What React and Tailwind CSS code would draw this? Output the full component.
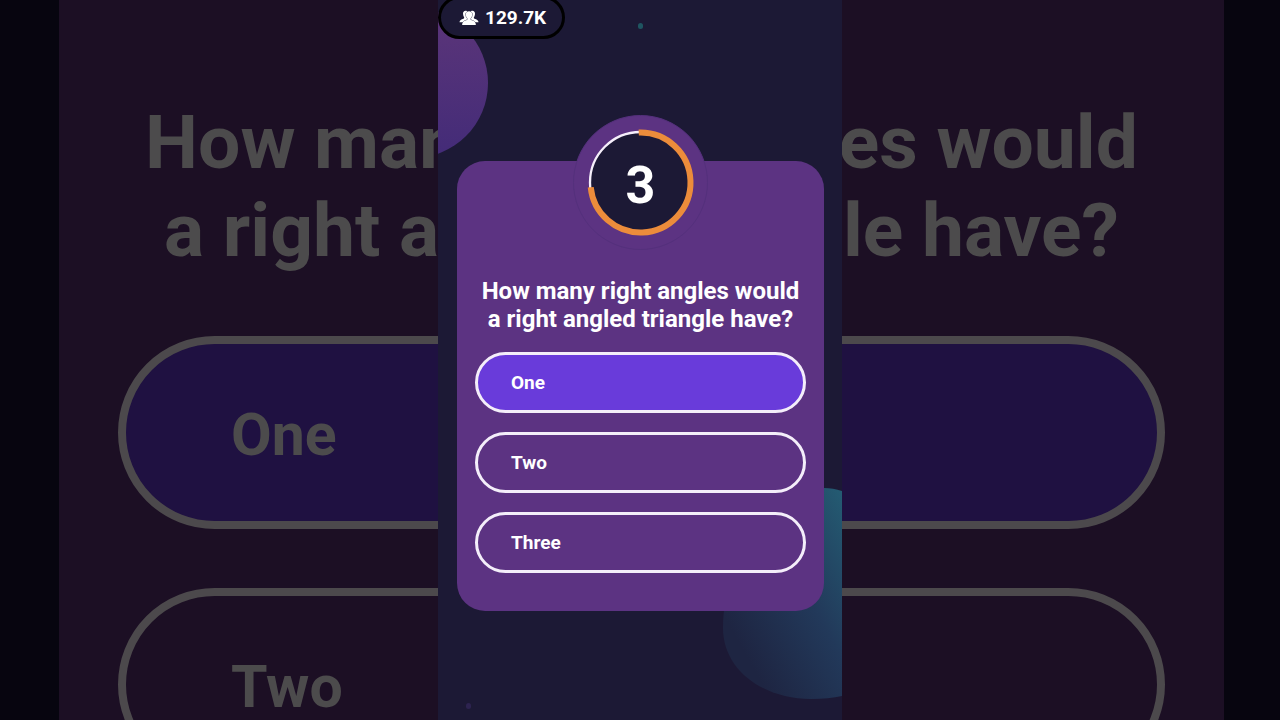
import React, { useState } from 'react';

const question = {
  lines: ['How many right angles would', 'a right angled triangle have?'],
  answers: ['One', 'Two', 'Three']
};

const PlayersIcon = () => (
  <svg viewBox="0 0 20 16" className="w-5 h-4" fill="currentColor" aria-hidden="true">
    <path d="M7 .8C5 .6 3.900 2 4 3.800c.1 1.600.5 2.800 1.200 3.600 0 .9-.4 1.200-1.500 1.600C1.800 9.700.7 10.300.5 12.200H8V.9z" />
    <path d="M13 .8c2-.2 3.100 1.200 3 3-.1 1.600-.5 2.800-1.200 3.600 0 .9.4 1.200 1.500 1.600 1.900.7 3 1.300 3.200 3.200H12V.9z" />
    <path
      d="M10 1.300c2.200 0 3.300 1.300 3.100 3.500-.1 1.600-.7 2.800-1.500 3.600-.1 1.300.3 1.700 1.600 2.100 2.200.7 3.500 1.400 3.700 4.500H3.100c.2-3.100 1.500-3.800 3.700-4.500 1.300-.4 1.700-.8 1.600-2.100-.8-.8-1.400-2-1.500-3.600-.2-2.200.9-3.500 3.100-3.500z"
      stroke="#1c1935"
      strokeWidth="0.8"
      paintOrder="stroke"
    />
  </svg>
);

const CountdownBadge = ({ seconds, progress }) => (
  <div className="relative w-[135px] h-[135px] mx-auto -mt-[47px] flex items-center justify-center rounded-full bg-[#5c3382] border border-[#54307c]">
    <svg viewBox="0 0 135 135" className="absolute -inset-px w-[135px] h-[135px]" fill="none" aria-hidden="true">
      <circle cx="67.5" cy="67.5" r="50.5" fill="#1c1935" stroke="#f6effb" strokeWidth="2.300" />
      <circle
        cx="67.5"
        cy="67.5"
        r="50"
        stroke="#ec8c3b"
        strokeWidth="6"
        pathLength="100"
        strokeDasharray={`${progress} 100`}
        transform="rotate(-92 67.5 67.5)"
      />
    </svg>
    <span className="relative text-[52px] leading-none font-bold pt-1.5">{seconds}</span>
  </div>
);

// Dimmed, enlarged copy of the question that fills the window behind the game
const Backdrop = ({ selected }) => (
  <div className="absolute inset-0 overflow-hidden bg-[#07050f] pl-[59px] pr-14" aria-hidden="true">
    <div className="min-h-full bg-[#1c0f24] text-[#4c4b4c] pt-[98px] px-[59px]">
      <p className="text-center text-[75px] leading-[88px] font-bold whitespace-nowrap">
        {question.lines[0]}
        <br />
        {question.lines[1]}
      </p>
      <div className="mt-[62px] flex flex-col gap-[59px]">
        {question.answers.map((answer) => (
          <div
            key={answer}
            className={`h-[193px] shrink-0 flex items-center rounded-full border-8 border-[#4c494c] pt-1.5 px-[105px] text-[59px] font-bold ${
              answer === selected ? 'bg-[#1f1141]' : ''
            }`}
          >
            {answer}
          </div>
        ))}
      </div>
    </div>
  </div>
);

const Bubbles = () => (
  <>
    <div className="absolute top-2 -left-[100px] w-[150px] h-[150px] rounded-full bg-linear-to-b from-[#5c3579] to-[#432b78]" />
    <div className="absolute top-[23px] left-[200px] w-[5px] h-[6px] rounded-full bg-[#1f5561]" />
    <div className="absolute bottom-[11px] left-[28px] w-[5px] h-[6px] rounded-full bg-[#2d2350]" />
    <svg viewBox="0 0 120 212" className="absolute right-0 bottom-[20px] w-[120px] h-[212px]" aria-hidden="true">
      <defs>
        <linearGradient id="teal" x1="1" y1="0" x2="0.2" y2="0.8">
          <stop offset="0" stopColor="#245c73" />
          <stop offset="0.5" stopColor="#22395a" />
          <stop offset="1" stopColor="#1e2542" />
        </linearGradient>
      </defs>
      <path
        d="M120 3C114 1 108 0 102 0 45 0 1 75 1 140c0 42 40 71 88 71 12 0 22-1 31-3z"
        fill="url(#teal)"
      />
    </svg>
  </>
);

const App = () => {
  const [selected, setSelected] = useState('One');

  return (
    <div className="relative min-h-screen overflow-hidden font-['Roboto',sans-serif] text-white">
      <Backdrop selected={selected} />

      {/* Game column */}
      <main className="relative w-full max-w-[404px] min-h-screen mx-auto overflow-hidden bg-[#1c1935]">
        <Bubbles />

        <div className="relative -mt-1 w-fit h-[43px] flex items-center gap-1.5 rounded-full border-3 border-black bg-[#1c1935] pl-[18px] pr-4">
          <PlayersIcon />
          <span className="text-[19px] leading-6 font-bold pt-px">129.7K</span>
        </div>

        {/* Question card */}
        <section className="relative mt-[122px] ml-[19px] mr-[18px] rounded-[28px] bg-[#5c3382] px-[18px] pt-px pb-[38px]">
          <CountdownBadge seconds={3} progress={74} />
          <h1 className="mt-[27px] text-center text-2xl leading-7 font-bold whitespace-nowrap">
            {question.lines[0]}
            <br />
            {question.lines[1]}
          </h1>
          <div className="mt-[19px] flex flex-col gap-[19px]">
            {question.answers.map((answer) => (
              <button
                key={answer}
                type="button"
                aria-pressed={answer === selected}
                onClick={() => setSelected(answer)}
                className={`h-[61px] flex items-center rounded-full border-3 border-[#f4eefa] pt-0.5 px-[33px] text-[19px] font-bold cursor-pointer ${
                  answer === selected ? 'bg-[#693bda]' : ''
                }`}
              >
                {answer}
              </button>
            ))}
          </div>
        </section>
      </main>
    </div>
  );
};

export default App;
